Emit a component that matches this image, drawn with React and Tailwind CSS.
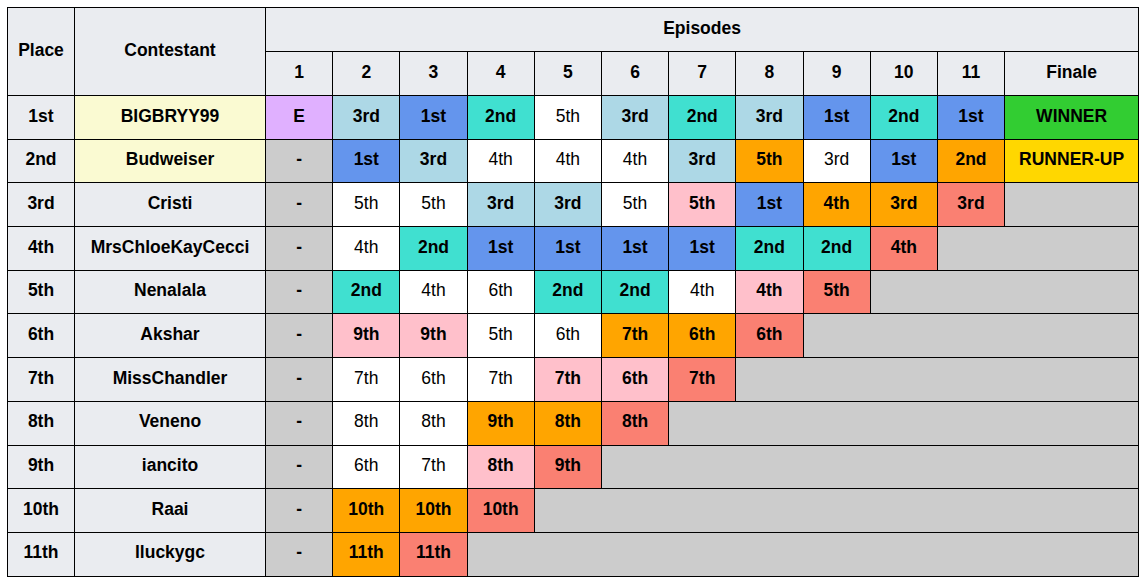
const C = {
  w: "bg-white font-normal",
  lb: "bg-[#add8e6] font-bold",
  cb: "bg-[#6495ed] font-bold",
  tq: "bg-[#40e0d0] font-bold",
  or: "bg-[#ffa500] font-bold",
  sa: "bg-[#fa8072] font-bold",
  pk: "bg-[#ffc0cb] font-bold",
};

// [text, colour key]
const rows = [
  { place: "1st", name: "BIGBRYY99", top: true, first: ["E", "bg-[#e0b0ff] font-bold"],
    eps: [["3rd","lb"],["1st","cb"],["2nd","tq"],["5th","w"],["3rd","lb"],["2nd","tq"],["3rd","lb"],["1st","cb"],["2nd","tq"],["1st","cb"]],
    finale: ["WINNER", "bg-[#32cd32] font-bold"] },
  { place: "2nd", name: "Budweiser", top: true,
    eps: [["1st","cb"],["3rd","lb"],["4th","w"],["4th","w"],["4th","w"],["3rd","lb"],["5th","or"],["3rd","w"],["1st","cb"],["2nd","or"]],
    finale: ["RUNNER-UP", "bg-[#ffd700] font-bold"] },
  { place: "3rd", name: "Cristi",
    eps: [["5th","w"],["5th","w"],["3rd","lb"],["3rd","lb"],["5th","w"],["5th","pk"],["1st","cb"],["4th","or"],["3rd","or"],["3rd","sa"]] },
  { place: "4th", name: "MrsChloeKayCecci",
    eps: [["4th","w"],["2nd","tq"],["1st","cb"],["1st","cb"],["1st","cb"],["1st","cb"],["2nd","tq"],["2nd","tq"],["4th","sa"]] },
  { place: "5th", name: "Nenalala",
    eps: [["2nd","tq"],["4th","w"],["6th","w"],["2nd","tq"],["2nd","tq"],["4th","w"],["4th","pk"],["5th","sa"]] },
  { place: "6th", name: "Akshar",
    eps: [["9th","pk"],["9th","pk"],["5th","w"],["6th","w"],["7th","or"],["6th","or"],["6th","sa"]] },
  { place: "7th", name: "MissChandler",
    eps: [["7th","w"],["6th","w"],["7th","w"],["7th","pk"],["6th","pk"],["7th","sa"]] },
  { place: "8th", name: "Veneno",
    eps: [["8th","w"],["8th","w"],["9th","or"],["8th","or"],["8th","sa"]] },
  { place: "9th", name: "iancito",
    eps: [["6th","w"],["7th","w"],["8th","pk"],["9th","sa"]] },
  { place: "10th", name: "Raai",
    eps: [["10th","or"],["10th","or"],["10th","sa"]] },
  { place: "11th", name: "lluckygc",
    eps: [["11th","or"],["11th","sa"]] },
];

const cell = "border border-black text-center align-middle p-0 pb-[2px]";
const head = "bg-[#eaecf0] font-bold";

export default function App() {
  return (
    <div className="pt-[7px] pl-[7px] bg-white min-h-screen" style={{ fontFamily: '"Liberation Sans", Arial, sans-serif' }}>
      <table className="table-fixed border-collapse w-[1131px] text-[17.5px] text-black leading-none">
        <colgroup>
          <col className="w-[67px]" />
          <col className="w-[191px]" />
          {Array.from({ length: 11 }).map((_, i) => (
            <col key={i} className="w-[67.2px]" />
          ))}
          <col className="w-[134px]" />
        </colgroup>
        <thead>
          <tr className="h-[44px]">
            <th rowSpan={2} className={`${cell} ${head}`}>Place</th>
            <th rowSpan={2} className={`${cell} ${head}`}>Contestant</th>
            <th colSpan={12} className={`${cell} ${head}`}>Episodes</th>
          </tr>
          <tr className="h-[44px]">
            {["1","2","3","4","5","6","7","8","9","10","11","Finale"].map((e) => (
              <th key={e} className={`${cell} ${head}`}>{e}</th>
            ))}
          </tr>
        </thead>
        <tbody>
          {rows.map((r) => {
            const rest = 10 - r.eps.length + (r.finale ? 0 : 1);
            return (
              <tr key={r.place} className="h-[43.7px]">
                <td className={`${cell} ${head}`}>{r.place}</td>
                <td className={`${cell} font-bold ${r.top ? "bg-[#fafad2]" : "bg-[#eaecf0]"}`}>{r.name}</td>
                <td className={`${cell} ${r.first ? r.first[1] : "bg-[#cccccc] font-bold"}`}>{r.first ? r.first[0] : "-"}</td>
                {r.eps.map(([t, k], i) => (
                  <td key={i} className={`${cell} ${C[k]}`}>{t}</td>
                ))}
                {r.finale ? (
                  <td className={`${cell} ${r.finale[1]}`}>{r.finale[0]}</td>
                ) : (
                  <td colSpan={rest} className={`${cell} bg-[#cccccc]`}></td>
                )}
              </tr>
            );
          })}
        </tbody>
      </table>
    </div>
  );
}
